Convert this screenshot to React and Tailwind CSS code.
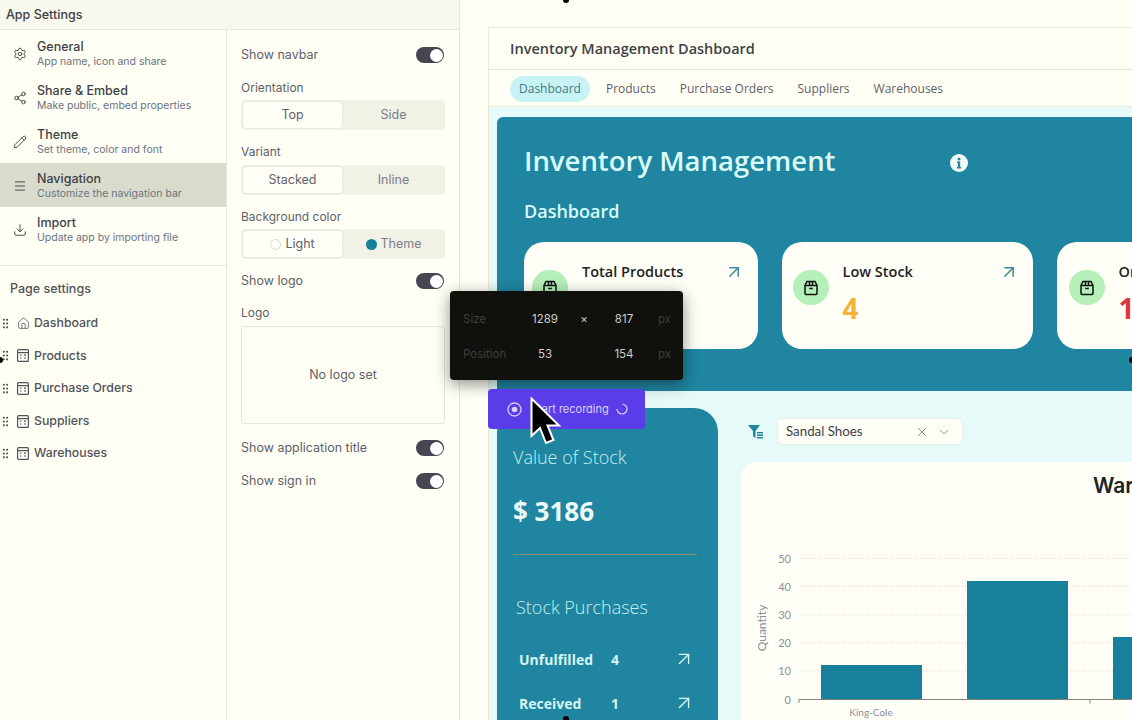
import { ArrowUpRight, ChevronDown, Download, GripVertical, Home, Menu, Pencil, Settings, Share2, X } from "lucide-react";

const inter = "font-['Inter',sans-serif]";
const openSans = "font-['Open_Sans',sans-serif]";

const settingsItems = [
  { title: "General", text: "App name, icon and share", icon: Settings },
  { title: "Share & Embed", text: "Make public, embed properties", icon: Share2 },
  { title: "Theme", text: "Set theme, color and font", icon: Pencil },
  { title: "Navigation", text: "Customize the navigation bar", icon: Menu, active: true },
  { title: "Import", text: "Update app by importing file", icon: Download },
];

const pages = ["Dashboard", "Products", "Purchase Orders", "Suppliers", "Warehouses"];

function PageIcon() {
  return (
    <svg width="12" height="13" viewBox="0 0 12 13" fill="none" stroke="#52525b" strokeWidth="1.2">
      <rect x="0.6" y="0.6" width="10.8" height="11.8" rx="1" />
      <path d="M0.6 3.6h10.8M3 6.2h1.4M7 6.2h2M3 9h1.4M7 9h2" />
    </svg>
  );
}

function BoxIcon() {
  return (
    <svg width="16" height="16" viewBox="0 0 16 16" fill="none" stroke="#111" strokeWidth="1.5">
      <path d="M4 1.500h8l2 4v8a1 1 0 0 1-1 1H3a1 1 0 0 1-1-1v-8z" />
      <path d="M2 5.500h12M6.200 8.600h3.600" />
      <path d="M6.500 1.500v4M9.500 1.500v4" />
    </svg>
  );
}

function Toggle() {
  return (
    <div className="mr-px flex h-[16px] w-[28px] items-center justify-end rounded-full bg-[#45464f] pr-[1.5px]">
      <div className="h-[13px] w-[13px] rounded-full bg-white" />
    </div>
  );
}

function Segment({ left, right, className }) {
  return (
    <div className={`grid h-[30px] grid-cols-2 rounded-[4px] bg-[#f1f1e6] p-px text-[12.5px] ${className}`}>
      <div className="flex items-center justify-center gap-1 rounded-[4px] border border-[#e8e8dc] bg-[#fffff8] text-[#5f6068]">
        {left}
      </div>
      <div className="flex items-center justify-center gap-1 text-[#7d7e86]">{right}</div>
    </div>
  );
}

function StatCard({ title, value, color, width, pad }) {
  return (
    <div className={`relative flex h-[107px] shrink-0 items-start rounded-[20px] bg-[#fffff8] pt-[28px] ${width} ${pad}`}>
      <div className="flex h-[35px] w-[36px] shrink-0 items-center justify-center rounded-full bg-[#b5efb9]">
        <BoxIcon />
      </div>
      <div className="ml-[14px] mt-[-8px]">
        <div className="text-[14.5px] leading-[20px] font-semibold whitespace-nowrap text-[#222]">{title}</div>
        <div className={`mt-[8px] text-[28px] leading-[36px] font-bold ${color}`}>{value}</div>
      </div>
      <ArrowUpRight className="absolute top-[20px] right-[14px] text-[#3d8a9a]" size={20} strokeWidth={1.8} />
    </div>
  );
}

function StockRow({ label, value }) {
  return (
    <div className="flex items-center pr-[2px] text-[14px] font-bold text-[#d6f6f4]">
      <span className="w-[92px]">{label}</span>
      <span>{value}</span>
      <ArrowUpRight className="ml-auto text-[#d6f6f4]" size={22} strokeWidth={1.5} />
    </div>
  );
}

function Chart() {
  const ticks = [
    [0, 699.5],
    [10, 671],
    [20, 643],
    [30, 615],
    [40, 586.5],
    [50, 558.5],
  ];
  return (
    <svg className="absolute top-0 left-0" width="1132" height="720" fill="none">
      {ticks.slice(1).map(([label, y]) => (
        <line key={label} x1="800" x2="1132" y1={y} y2={y} stroke="#ddd9b8" strokeDasharray="1 2" />
      ))}
      {ticks.map(([label, y]) => (
        <text key={label} x="791" y={y + 4} textAnchor="end" fontFamily="Lato, sans-serif" fontSize="11" fill="#8b8f98">
          {label}
        </text>
      ))}
      <rect x="821" y="665" width="101" height="34" fill="#17809a" />
      <rect x="967" y="581" width="101" height="118" fill="#17809a" />
      <rect x="1113" y="637" width="30" height="62" fill="#17809a" />
      <path d="M799 703v-3.500H1132M1090 699.500v4" stroke="#85857a" />
      <text x="871" y="716" textAnchor="middle" fontFamily="Lato, sans-serif" fontSize="10" fill="#8b8f98">
        King-Cole
      </text>
      <text
        transform="translate(766 628) rotate(-90)"
        textAnchor="middle"
        fontFamily="Lato, sans-serif"
        fontSize="12"
        fill="#8b8f98"
      >
        Quantity
      </text>
    </svg>
  );
}

export default function App() {
  return (
    <div className={`relative flex h-[720px] w-[1132px] overflow-hidden bg-[#fffff6] ${inter}`}>
      {/* app settings column */}
      <aside className="flex w-[227px] shrink-0 flex-col border-r border-[#e7e7da]">
        <div className="absolute top-0 left-0 flex h-[30px] w-[459px] items-center border-b border-[#e7e7da] bg-[#f8f8ee] px-[6px] pt-px text-[12.5px] font-medium text-[#3f3f46]">
          App Settings
        </div>
        <div className="mt-[31px] border-b border-[#e7e7da] pb-[14px]">
          {settingsItems.map(({ title, text, icon: Icon, active }) => (
            <div key={title} className={`flex h-[44px] items-center pt-[2px] ${active ? "bg-[#d9dccc]" : ""}`}>
              <Icon className="mx-[13px] shrink-0 text-[#3f3f46]" size={14} strokeWidth={1.6} />
              <div className="ml-[-3px]">
                <div className="text-[12.5px] leading-[16px] font-medium text-[#3f3f46]">{title}</div>
                <div className="text-[10.5px] leading-[14px] whitespace-nowrap text-[#6b7280]">{text}</div>
              </div>
            </div>
          ))}
        </div>
        <div className="mt-[15px] px-[10px] text-[12.5px] leading-[16px] font-medium text-[#52525b]">Page settings</div>
        <div className="mt-[10px]">
          {pages.map((page, i) => (
            <div key={page} className="flex h-[32.6px] items-center text-[12.3px] font-medium text-[#52525b]">
              <GripVertical className="ml-[-1px] shrink-0 text-[#52525b]" size={13} strokeWidth={2} />
              <span className="ml-[5px] flex w-[17px] shrink-0">
                {i === 0 ? <Home size={13} strokeWidth={1.4} className="text-[#52525b]" /> : <PageIcon />}
              </span>
              <span>{page}</span>
            </div>
          ))}
        </div>
      </aside>

      {/* navigation settings column */}
      <section className="flex w-[233px] shrink-0 flex-col border-r border-[#e7e7da] px-[14px] pt-[46px] text-[12.5px] text-[#5f6068]">
        <div className="flex h-[18px] items-center justify-between">
          <span>Show navbar</span>
          <Toggle />
        </div>
        <div className="mt-[15px] text-[12px] leading-[18px]">Orientation</div>
        <Segment className="mt-[3px]" left="Top" right="Side" />
        <div className="mt-[13px] text-[12px] leading-[18px]">Variant</div>
        <Segment className="mt-[4px]" left="Stacked" right="Inline" />
        <div className="mt-[13px] text-[12px] leading-[18px]">Background color</div>
        <Segment
          className="mt-[3px]"
          left={
            <>
              <span className="h-[11px] w-[11px] rounded-full border border-[#d8d8c8] bg-[#fffff8]" />
              Light
            </>
          }
          right={
            <>
              <span className="h-[11px] w-[11px] rounded-full bg-[#17809a]" />
              Theme
            </>
          }
        />
        <div className="mt-[13px] flex h-[18px] items-center justify-between">
          <span>Show logo</span>
          <Toggle />
        </div>
        <div className="mt-[14px] text-[12px] leading-[18px]">Logo</div>
        <div className="mt-[4px] flex h-[98px] items-center justify-center rounded-[3px] border border-[#e5e5d8] text-[#5f6068]">
          No logo set
        </div>
        <div className="mt-[15px] flex h-[18px] items-center justify-between">
          <span>Show application title</span>
          <Toggle />
        </div>
        <div className="mt-[15px] flex h-[18px] items-center justify-between">
          <span>Show sign in</span>
          <Toggle />
        </div>
      </section>

      {/* app preview */}
      <main className={`min-w-0 flex-1 pt-[27px] pl-[28px] ${openSans}`}>
        <div className="h-[693px] w-[700px] border-t border-l border-[#e9e9da]">
          <div className="flex h-[42px] items-center border-b border-[#e4e4d8] pl-[21px] text-[14.500px] font-semibold text-[#3f3f46]">
            Inventory Management Dashboard
          </div>
          <div className="flex h-[37px] items-center border-b border-[#e9e9da] pt-[2px] pl-[21px] text-[12px] text-[#5f6068]">
            <span className="mr-[4px] rounded-full bg-[#c8f3f4] px-[9px] py-[4px] text-[#3f7a88]">Dashboard</span>
            <span className="px-[12px]">Products</span>
            <span className="px-[12px]">Purchase Orders</span>
            <span className="px-[12px]">Suppliers</span>
            <span className="px-[12px]">Warehouses</span>
          </div>
          <div className="h-[613px] bg-[#e6fbf9] pt-[10px] pl-[8px]">
            <div className="h-[274px] rounded-t-[6px] bg-[#1f85a0] pt-[25px] pl-[27px]">
              <div className="flex items-center">
                <h1 className="w-[426px] text-[27.500px] leading-[38px] font-semibold text-[#d8fbfb]">Inventory Management</h1>
                <svg className="mt-[4px]" width="18" height="18" viewBox="0 0 18 18">
                  <circle cx="9" cy="9" r="9" fill="#f4fbf8" />
                  <circle cx="9" cy="5" r="1.500" fill="#1f85a0" />
                  <path d="M7 7.500h3.200v5.500h1V14.500H7V13h1V9H7z" fill="#1f85a0" />
                </svg>
              </div>
              <div className="mt-[19px] text-[18px] leading-[24px] font-semibold text-[#d8fbfb]">Dashboard</div>
              <div className="mt-[19px] flex gap-[24px]">
                <StatCard title="Total Products" value="32" color="text-[#f5b335]" width="w-[234px]" pad="pl-[8px]" />
                <StatCard title="Low Stock" value="4" color="text-[#f5b335]" width="w-[251px]" pad="pl-[10.5px]" />
                <StatCard title="On Order" value="1" color="text-[#d9363e]" width="w-[251px]" pad="pl-[11.5px]" />
              </div>
            </div>
            <div className="mt-[17px] flex">
              <div className="h-[312px] w-[221px] shrink-0 rounded-t-[24px] bg-[#1f85a0] pt-[36px] pr-[21px] pl-[16px]">
                <div className="text-[18px] leading-[26px] font-light text-[#c8f0ee]">Value of Stock</div>
                <div className="mt-[23px] text-[26px] leading-[36px] font-bold text-[#ecfbf7]">$ 3186</div>
                <div className="mt-[25px] h-px bg-[#8b8a66]" />
                <div className="mt-[39px] pl-[3px] text-[18px] leading-[26px] font-light text-[#c8f0ee]">Stock Purchases</div>
                <div className="mt-[28px] flex flex-col gap-[22px] pl-[6px]">
                  <StockRow label="Unfulfilled" value="4" />
                  <StockRow label="Received" value="1" />
                </div>
              </div>
              <div className="ml-[23px] min-w-0 flex-1">
                <div className="mt-[10px] flex h-[27px] items-center pl-[7px]">
                  <svg width="16" height="14" viewBox="0 0 16 14" fill="#1f85a0">
                    <path d="M0 0h12L7.500 6v7L5 11V6z" />
                    <path d="M9 7h6v1.400H9zM9 9.500h6v1.400H9zM9 12h6v1.400H9z" />
                  </svg>
                  <div className="ml-[13px] flex h-[27px] w-[186px] items-center rounded-[5px] border border-[#e4efe8] bg-[#fffff8] pr-[11px] pl-[8px] font-['Lato',sans-serif] text-[13.300px] text-[#3f3f46]">
                    <span>Sandal Shoes</span>
                    <X className="ml-auto text-[#7b8088]" size={14} strokeWidth={1.5} />
                    <ChevronDown className="ml-[8px] text-[#7b8088]" size={14} strokeWidth={1.5} />
                  </div>
                </div>
                <div className="mt-[17px] h-[300px] rounded-tl-[16px] bg-[#fffff8] pt-[10px] pl-[352px] font-['Inter',sans-serif] text-[21px] leading-[28px] font-semibold whitespace-nowrap text-[#222]">
                  Warehouse Stock
                </div>
              </div>
            </div>
          </div>
        </div>
      </main>

      <Chart />

      {/* screen recorder overlay */}
      <div className="absolute top-[291px] left-[450px] grid h-[89px] w-[233px] grid-cols-[52px_60px_18px_62px_1fr] grid-rows-[35px_35px] content-center items-center rounded-[4px] bg-[#10100c] pt-[4px] pl-[13px] text-center text-[11.500px] text-[#cfcfc6] shadow-[0_4px_16px_rgba(0,0,0,0.45)]">
        <span className="text-left text-[#3f3f3a]">Size</span>
        <span>1289</span>
        <span>×</span>
        <span>817</span>
        <span className="pl-[3px] text-left text-[#3f3f3a]">px</span>
        <span className="text-left whitespace-nowrap text-[#3f3f3a]">Position</span>
        <span>53</span>
        <span />
        <span>154</span>
        <span className="pl-[3px] text-left text-[#3f3f3a]">px</span>
      </div>
      <div className="absolute top-[389px] left-[488px] flex h-[40px] w-[157px] items-center rounded-[4px] bg-[#5a3de8] pl-[19px] text-[11px] text-[#d8cffa]">
        <svg width="15" height="15" viewBox="0 0 15 15" fill="none" stroke="#d8cffa" strokeWidth="1.3">
          <circle cx="7.500" cy="7.500" r="6.500" />
          <circle cx="7.500" cy="7.500" r="2.800" fill="#d8cffa" stroke="none" />
        </svg>
        <span className="ml-[9px]">Start recording</span>
        <svg className="ml-[7px]" width="12" height="12" viewBox="0 0 12 12" fill="none" stroke="#d8cffa" strokeWidth="1.200">
          <path d="M6 1a5 5 0 1 1-5 5" />
        </svg>
      </div>
      <svg className="absolute top-[397px] left-[530px]" width="32" height="52" viewBox="0 0 32 52">
        <path d="M1.500 1.500V39l8.500-8 6 15 7.500-3-6-14.500H29z" fill="#000" stroke="#fff" strokeWidth="2" />
      </svg>

      {/* capture handles */}
      <div className="absolute top-[-3px] left-[563px] h-[6px] w-[6px] rounded-full bg-black" />
      <div className="absolute top-[716px] left-[563px] h-[6px] w-[6px] rounded-full bg-black" />
      <div className="absolute top-[357px] left-[-3px] h-[6px] w-[6px] rounded-full bg-black" />
      <div className="absolute top-[357px] left-[1129px] h-[6px] w-[6px] rounded-full bg-black" />
    </div>
  );
}
